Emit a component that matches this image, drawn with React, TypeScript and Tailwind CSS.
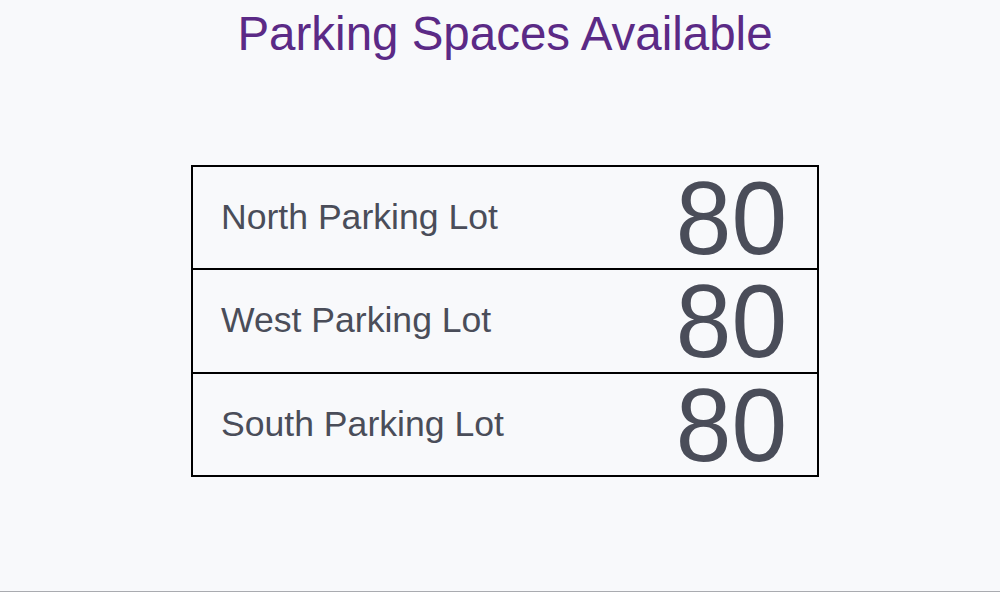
const LOTS = [
  { name: "North Parking Lot", spaces: 80, h: "h-[101px]" },
  { name: "West Parking Lot", spaces: 80, h: "h-[104px] border-t-2 border-black" },
  { name: "South Parking Lot", spaces: 80, h: "h-[103px] border-t-2 border-black" },
];

export default function App() {
  return (
    <div
      className="flex h-[592px] w-full flex-col items-center border-b border-[#a9abb0] bg-[#f8f9fb] pl-[10px]"
      style={{ fontFamily: '"Liberation Sans", Arial, sans-serif' }}
    >
      <h1 className="mt-[8px] text-[47.5px] leading-[52px] text-[#5b2a86]">
        Parking Spaces Available
      </h1>

      <div className="mt-[105px] flex w-[628px] flex-col border-2 border-black">
        {LOTS.map((lot) => (
          <div
            key={lot.name}
            className={`flex items-center justify-between pl-[28px] pr-[30px] ${lot.h}`}
          >
            <span className="text-[35.6px] text-[#4a4d59]">{lot.name}</span>
            <span className="text-[100px] leading-none text-[#4a4d59] [transform:scaleY(1.03)]">
              {lot.spaces}
            </span>
          </div>
        ))}
      </div>
    </div>
  );
}
